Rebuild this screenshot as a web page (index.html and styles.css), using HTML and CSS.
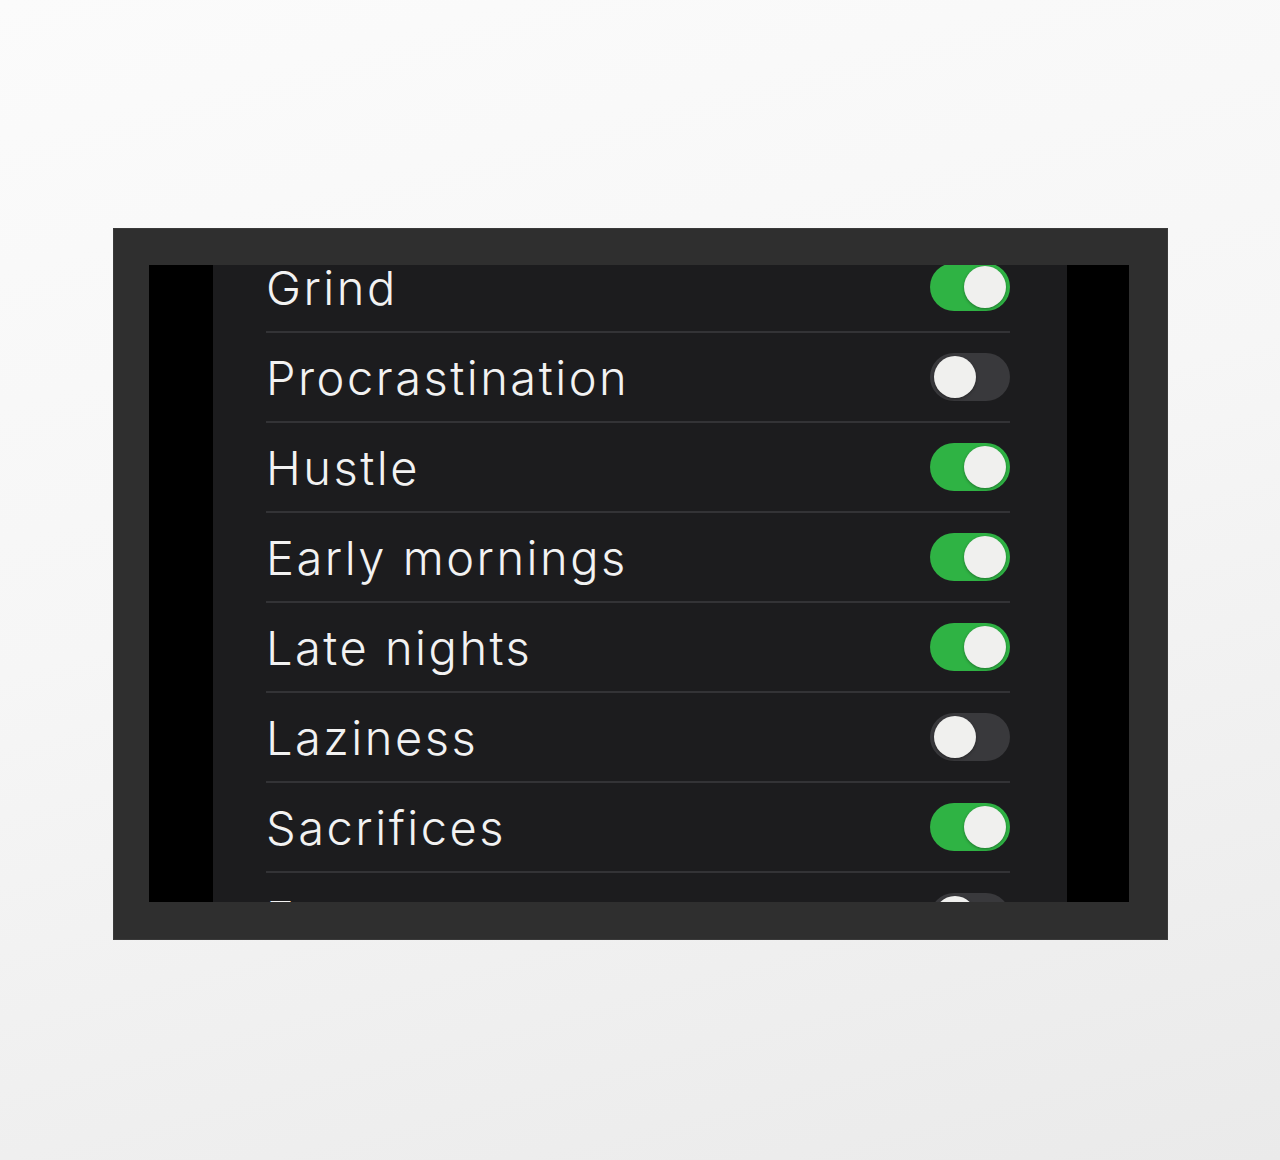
FILE: index.html
```html
<!DOCTYPE html>
<html>
<head>
<meta charset="utf-8">
<link rel="stylesheet" href="styles.css">
</head>
<body>
<div class="stage">
  <div class="frame">
    <div class="screen">
      <div class="panel">
        <div class="list">
          <div class="row"><span class="label">Grind</span><span class="toggle on"><span class="knob"></span></span></div>
          <div class="row"><span class="label">Procrastination</span><span class="toggle"><span class="knob"></span></span></div>
          <div class="row"><span class="label">Hustle</span><span class="toggle on"><span class="knob"></span></span></div>
          <div class="row"><span class="label">Early mornings</span><span class="toggle on"><span class="knob"></span></span></div>
          <div class="row"><span class="label">Late nights</span><span class="toggle on"><span class="knob"></span></span></div>
          <div class="row"><span class="label">Laziness</span><span class="toggle"><span class="knob"></span></span></div>
          <div class="row"><span class="label">Sacrifices</span><span class="toggle on"><span class="knob"></span></span></div>
          <div class="row"><span class="label">Excuses</span><span class="toggle"><span class="knob"></span></span></div>
        </div>
      </div>
    </div>
  </div>
</div>
</body>
</html>
```
FILE: styles.css
```css
html, body {
  margin: 0;
  padding: 0;
}
body {
  width: 1280px;
  height: 1160px;
  overflow: hidden;
  background: linear-gradient(165deg, #fbfbfb 0%, #f6f6f6 45%, #eaeaea 100%);
  font-family: Inter, "Liberation Sans", sans-serif;
}
.stage {
  padding-top: 228px;
  padding-left: 113px;
}
.frame {
  width: 1055px;
  height: 712px;
  box-sizing: border-box;
  padding: 37px 39px 38px 36px;
  background: #2f2f2f;
  box-shadow: 0 0 0 1px #3a3a3a inset;
}
.screen {
  height: 100%;
  background: #000;
  padding-left: 64px;
  box-sizing: border-box;
}
.panel {
  width: 854px;
  height: 100%;
  background: #1c1c1e;
  overflow: hidden;
}
.list {
  margin-top: -22px;
  padding-left: 53px;
  padding-right: 57px;
}
.row {
  height: 88px;
  border-bottom: 2px solid #333336;
  display: flex;
  align-items: center;
  justify-content: space-between;
}
.label {
  color: #f2f2f2;
  font-size: 47px;
  letter-spacing: 2.5px;
  font-weight: 300;
  line-height: 1;
}
.toggle {
  width: 80px;
  height: 48px;
  border-radius: 24px;
  background: #39393c;
  box-sizing: border-box;
  padding: 3px 4px;
  display: flex;
  justify-content: flex-start;
}
.toggle.on {
  background: #2fb344;
  justify-content: flex-end;
}
.knob {
  width: 42px;
  height: 42px;
  border-radius: 50%;
  background: #f0f0ee;
  box-shadow: 0 1px 3px rgba(0,0,0,0.35);
}
```
